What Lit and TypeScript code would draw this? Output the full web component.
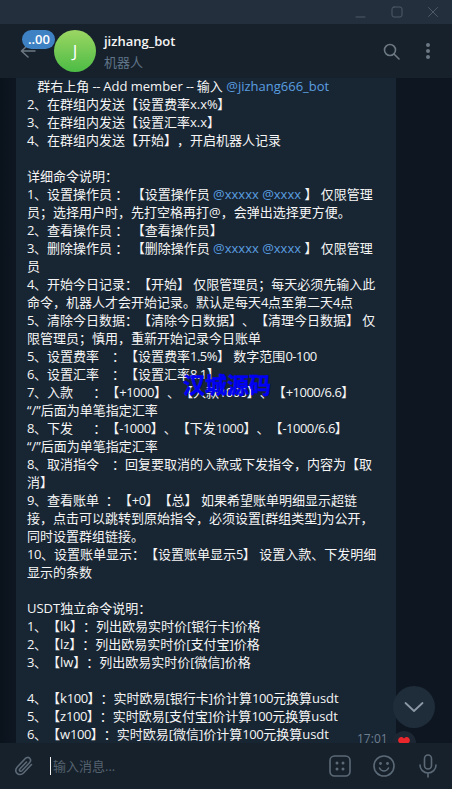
import { LitElement, css, html, svg } from 'lit'
import { customElement } from 'lit/decorators.js'

// a line is plain text; @mentions get coloured when rendered
const LINES = [
  '   群右上角 -- Add member -- 输入 @jizhang666_bot',
  '2、在群组内发送【设置费率x.x%】',
  '3、在群组内发送【设置汇率x.x】',
  '4、在群组内发送【开始】，开启机器人记录',
  '',
  '详细命令说明：',
  '1、设置操作员 ： 【设置操作员 @xxxxx @xxxx 】 仅限管理',
  '员；选择用户时，先打空格再打@，会弹出选择更方便。',
  '2、查看操作员 ： 【查看操作员】',
  '3、删除操作员 ： 【删除操作员 @xxxxx @xxxx 】 仅限管理',
  '员',
  '4、开始今日记录：【开始】 仅限管理员；每天必须先输入此',
  '命令，机器人才会开始记录。默认是每天4点至第二天4点',
  '5、清除今日数据：【清除今日数据】、【清理今日数据】 仅',
  '限管理员；慎用，重新开始记录今日账单',
  '5、设置费率　：【设置费率1.5%】 数字范围0-100',
  '6、设置汇率　：【设置汇率8.1】',
  '7、入款      ：【+1000】、【入款1000】、【+1000/6.6】',
  '“/”后面为单笔指定汇率',
  '8、下发      ：【-1000】、【下发1000】、【-1000/6.6】',
  '“/”后面为单笔指定汇率',
  '8、取消指令　：回复要取消的入款或下发指令，内容为【取',
  '消】',
  '9、查看账单  ：【+0】【总】 如果希望账单明细显示超链',
  '接，点击可以跳转到原始指令，必须设置[群组类型]为公开，',
  '同时设置群组链接。',
  '10、设置账单显示：【设置账单显示5】 设置入款、下发明细',
  '显示的条数',
  '',
  'USDT独立命令说明：',
  '1、【lk】：列出欧易实时价[银行卡]价格',
  '2、【lz】：列出欧易实时价[支付宝]价格',
  '3、【lw】：列出欧易实时价[微信]价格',
  '',
  '4、【k100】：实时欧易[银行卡]价计算100元换算usdt',
  '5、【z100】：实时欧易[支付宝]价计算100元换算usdt',
  '6、【w100】：实时欧易[微信]价计算100元换算usdt',
]

const icon = (w: number, h: number, body: unknown) => html`
  <svg width=${w} height=${h} viewBox="0 0 ${w} ${h}" fill="none" stroke="currentColor"
    stroke-width="2" stroke-linecap="round" stroke-linejoin="round">${body}</svg>`

@customElement('app-root')
export class AppRoot extends LitElement {
  static styles = css`
    :host {
      display: flex;
      flex-direction: column;
      width: 452px;
      height: 789px;
      overflow: hidden;
      background: #0e1621;
      color: #f5f5f5;
      font: 13px/18px 'Open Sans', 'Noto Sans CJK SC', sans-serif;
      position: relative;
      text-spacing-trim: space-all;
    }

    .titlebar {
      flex: none;
      height: 24px;
      background: #242f3d;
      display: flex;
      justify-content: flex-end;
      align-items: center;
      gap: 24px;
      padding-right: 13px;
      color: #4c5a69;
    }

    .header {
      flex: none;
      height: 54px;
      background: #17212b;
      display: flex;
      align-items: center;
      padding: 0 22px 0 20px;
      position: relative;
      color: #6c7883;
    }

    .avatar {
      width: 42px;
      height: 42px;
      border-radius: 50%;
      margin-left: 18px;
      background: linear-gradient(#9cd663, #4cbc45);
      color: #fff;
      font-size: 17px;
      display: flex;
      align-items: center;
      justify-content: center;
    }

    .peer {
      flex: 1;
      margin-left: 8px;
      display: flex;
      flex-direction: column;
      gap: 3px;
    }

    .peer b {
      font-weight: 600;
      color: #f5f5f5;
    }

    .peer span {
      color: #5f7488;
    }

    .actions {
      display: flex;
      align-items: center;
      gap: 26px;
    }

    .badge {
      position: absolute;
      left: 22px;
      top: 6px;
      height: 19px;
      padding: 0 5px 0 6px;
      border-radius: 10px;
      background: #3f82c4;
      color: #fff;
      font-size: 13px;
      font-weight: 600;
      line-height: 18px;
    }

    .feed {
      flex: 1;
      min-height: 0;
      overflow: hidden;
      position: relative;
      padding-left: 16px;
      background: linear-gradient(90deg, #0a121c, #0e1621 14px);
    }

    .bubble {
      width: 380px;
      box-sizing: border-box;
      padding: 0 11px;
      margin-top: -1px;
      background: #182533;
      min-height: 100%;
    }

    .line {
      height: 18px;
      white-space: pre;
    }

    .mention {
      color: #5a9fe0;
    }

    /* numbers and dashes run a little tighter in the reference */
    .num {
      letter-spacing: -0.5px;
    }

    .watermark {
      position: absolute;
      left: 183px;
      top: 293px;
      color: #0000f5;
      font-size: 22px;
      font-weight: 700;
      line-height: 26px;
      -webkit-text-stroke: 0.5px #0000f5;
    }

    .time {
      position: absolute;
      left: 357px;
      bottom: -5px;
      font-size: 12px;
      color: #6d7f8f;
    }

    .reaction {
      position: absolute;
      left: 392px;
      bottom: -12px;
      width: 24px;
      height: 24px;
      border-radius: 50%;
      background: #1c2733;
      display: flex;
      justify-content: center;
      padding-top: 6px;
      box-sizing: border-box;
    }

    .down {
      position: absolute;
      left: 393px;
      bottom: 15px;
      width: 42px;
      height: 42px;
      border-radius: 50%;
      background: #1f2c3a;
      color: #8d99a5;
      display: flex;
      align-items: center;
      justify-content: center;
    }

    .composer {
      flex: none;
      height: 46px;
      background: #17212b;
      display: flex;
      align-items: center;
      padding: 0 15px 0 14px;
      color: #5c6a77;
      position: relative;
    }

    .caret {
      width: 1px;
      height: 18px;
      margin-left: 16px;
      background: #f5f5f5;
    }

    .placeholder {
      flex: 1;
      margin-left: 2px;
      color: #55626f;
    }

    .tools {
      display: flex;
      align-items: center;
      gap: 22px;
    }

    .mic {
      display: flex;
      margin-left: 2px;
    }
  `

  private renderPlain(text: string) {
    return text.split(/([-+%0-9][-+%0-9./]*)/).map((p, i) =>
      i % 2 ? html`<span class="num">${p}</span>` : p)
  }

  private renderLine(text: string) {
    const parts = text.split(/(@[a-z0-9_]+)/)
    return html`<div class="line">${parts.map((p, i) =>
      i % 2 ? html`<span class="mention">${p}</span>` : this.renderPlain(p))}</div>`
  }

  render() {
    return html`
      <div class="titlebar">
        ${icon(12, 12, svg`<path d="M1 11h9" stroke-width="1"/>`)}
        ${icon(12, 12, svg`<rect x="1" y="1" width="10" height="10" rx="2" stroke-width="1"/>`)}
        ${icon(12, 12, svg`<path d="M1.500 1.500l9 9M10.500 1.500l-9 9" stroke-width="1"/>`)}
      </div>
      <div class="header">
        ${icon(16, 14, svg`<path d="M15 7H2M8 1L1.500 7 8 13" stroke-width="1.500"/>`)}
        <div class="avatar">J</div>
        <div class="peer"><b>jizhang_bot</b><span>机器人</span></div>
        <div class="actions">
          ${icon(17, 17, svg`<circle cx="7" cy="7" r="5.500" stroke-width="1.600"/><path d="M11 11l5 5" stroke-width="1.600"/>`)}
          <svg width="4" height="16" viewBox="0 0 4 16" fill="currentColor">
            <circle cx="2" cy="2" r="2"/><circle cx="2" cy="8" r="2"/><circle cx="2" cy="14" r="2"/>
          </svg>
        </div>
        <div class="badge">..00</div>
      </div>
      <div class="feed">
        <div class="bubble">${LINES.map(l => this.renderLine(l))}</div>
        <div class="watermark">汉城源码</div>
        <div class="time">17:01</div>
        <div class="reaction">
          <svg width="12" height="10" viewBox="0 0 12 10" fill="#e8262c">
            <path d="M6 10L1 5.500C-1 3 .8 0 3.200 0 4.500 0 5.400.6 6 1.500 6.600.6 7.500 0 8.800 0 11.200 0 13 3 11 5.500z"/>
          </svg>
        </div>
        <div class="down">
          ${icon(20, 10, svg`<path d="M1.500 1L10 9l8.500-8" stroke-width="1.800"/>`)}
        </div>
      </div>
      <div class="composer">
        ${icon(20, 22, svg`<path d="M17.500 9.500l-8 8.500c-2 2-5 2-6.500.3S1.500 14 3.300 12l8-8.500c1.300-1.400 3.300-1.400 4.400-.2s1.100 3-.2 4.400l-7.600 8c-.7.700-1.600.7-2.100.2s-.5-1.400.2-2.100l6.500-6.800" stroke-width="1.600"/>`)}
        <div class="caret"></div>
        <div class="placeholder">输入消息...</div>
        <div class="tools">
          ${icon(22, 22, svg`<rect x="1" y="1" width="20" height="20" rx="4.500" stroke-width="1.600"/><g fill="currentColor" stroke="none"><circle cx="8" cy="8" r="1.500"/><circle cx="14" cy="8" r="1.500"/><circle cx="8" cy="14" r="1.500"/><circle cx="14" cy="14" r="1.500"/></g>`)}
          ${icon(22, 22, svg`<circle cx="11" cy="11" r="10" stroke-width="1.600"/><path d="M6.500 13c1 2 2.600 3 4.500 3s3.500-1 4.500-3" stroke-width="1.600"/><g fill="currentColor" stroke="none"><circle cx="7.500" cy="8.500" r="1.400"/><circle cx="14.500" cy="8.500" r="1.400"/></g>`)}
          <span class="mic">${icon(18, 24, svg`<rect x="5.500" y="1" width="7" height="14" rx="3.500" stroke-width="1.600"/><path d="M1 11c0 4.500 3.500 8 8 8s8-3.500 8-8M9 19v4" stroke-width="1.600"/>`)}</span>
        </div>
      </div>
    `
  }
}
